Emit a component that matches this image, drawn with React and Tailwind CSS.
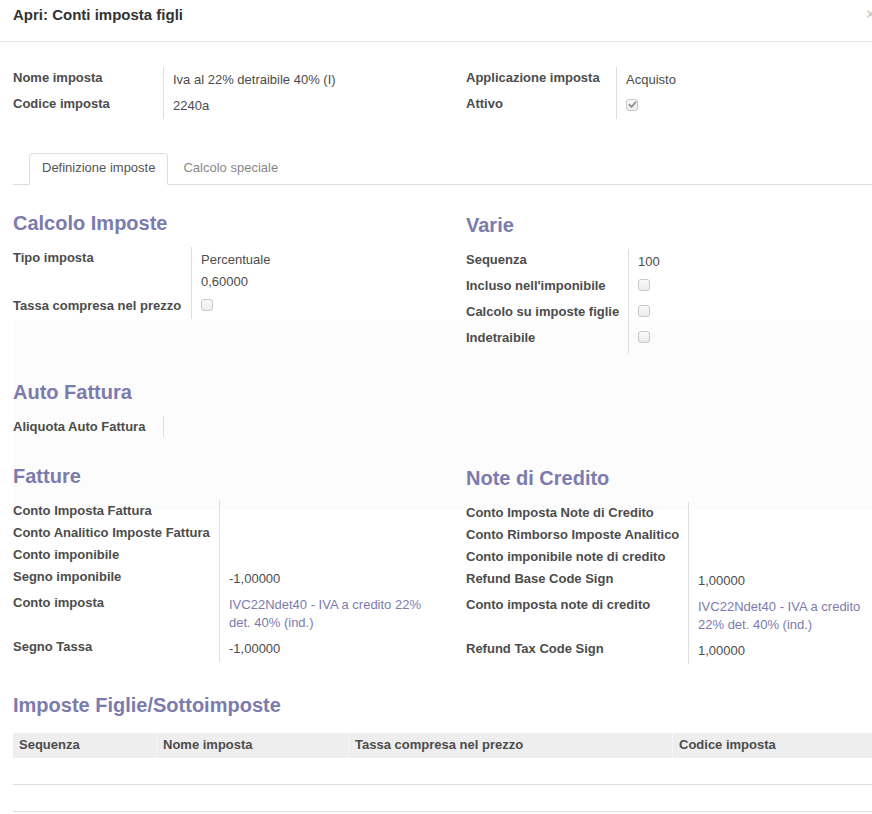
import React from "react";

const font = { fontFamily: '"Liberation Sans", Arial, Helvetica, sans-serif' };

function Check({ checked }) {
  return (
    <span className="inline-flex h-[12px] w-[12px] items-center justify-center rounded-[3px] border border-[#c8c8c8] bg-[linear-gradient(#fafafa,#ececec)]">
      {checked && (
        <svg className="h-[9px] w-[9px]" viewBox="0 0 10 10" fill="none">
          <path d="M1.5 5.2l2.4 2.4L8.6 2.3" stroke="#8a8a8a" strokeWidth="1.8" strokeLinecap="round" strokeLinejoin="round" />
        </svg>
      )}
    </span>
  );
}

function Link({ children }) {
  return <span className="text-[#7c7bad]">{children}</span>;
}

// rows: [label, value, height, valueIsCheckbox]
function Group({ labelW, rows }) {
  return (
    <div className="grid" style={{ gridTemplateColumns: `${labelW}px 1fr` }}>
      {rows.map(([label, value, h, box], i) => (
        <React.Fragment key={i}>
          <div className="pt-[2px] font-bold text-[#4c4c4c]" style={{ height: h }}>
            {label}
          </div>
          <div className={`border-l border-[#dedede] pl-[9px] ${box ? "pt-[3px]" : "pt-[4px]"}`} style={{ height: h }}>
            {value}
          </div>
        </React.Fragment>
      ))}
    </div>
  );
}

function Heading({ children }) {
  return <h2 className="mb-[12px] text-[20px] leading-[24px] font-bold text-[#7c7bad]">{children}</h2>;
}

export default function App() {
  return (
    <div className="w-[872px] overflow-hidden bg-white text-[13px] leading-[18px] text-[#4c4c4c]" style={font}>
      {/* header */}
      <div className="flex h-[42px] items-start justify-between border-b border-[#e5e5e5] pl-[13px]">
        <h4 className="pt-[6px] text-[15px] leading-[18px] font-bold text-[#333]">Apri: Conti imposta figli</h4>
        <span className="mr-[-3px] pt-[5px] text-[15px] leading-[18px] font-bold text-[#cccccc]">×</span>
      </div>

      <div className="ml-[13px]">
        {/* top fields */}
        <div className="mt-[25px] grid grid-cols-[453px_1fr]">
          <Group
            labelW={150}
            rows={[
              ["Nome imposta", "Iva al 22% detraibile 40% (I)", 26],
              ["Codice imposta", "2240a", 26],
            ]}
          />
          <Group
            labelW={150}
            rows={[
              ["Applicazione imposta", "Acquisto", 26],
              ["Attivo", <Check checked />, 26, true],
            ]}
          />
        </div>

        {/* tabs */}
        <div className="mt-[34px] flex border-b border-[#dddddd] pl-[16px]">
          <div className="-mb-px h-[32px] rounded-t-[4px] border border-[#dddddd] border-b-white bg-white px-[12px] pt-[5px] text-[#555]">
            Definizione imposte
          </div>
          <div className="-mb-px ml-[2px] h-[32px] px-[13px] pt-[6px] text-[#888]">Calcolo speciale</div>
        </div>

        <div className="bg-[linear-gradient(to_bottom,transparent_135px,#fcfcfc_135px,#fcfcfc_325px,transparent_325px)] pt-[26px]">
          <div className="grid grid-cols-[453px_1fr]">
            <div>
              <Heading>Calcolo Imposte</Heading>
              <Group
                labelW={178}
                rows={[
                  ["Tipo imposta", "Percentuale", 22],
                  ["", "0,60000", 26],
                  ["Tassa compresa nel prezzo", <Check />, 24, true],
                ]}
              />
            </div>
            <div className="mt-[2px]">
              <Heading>Varie</Heading>
              <Group
                labelW={162}
                rows={[
                  ["Sequenza", "100", 26],
                  ["Incluso nell'imponibile", <Check />, 26, true],
                  ["Calcolo su imposte figlie", <Check />, 26, true],
                  ["Indetraibile", <Check />, 26, true],
                ]}
              />
            </div>
          </div>

          <div className="mt-[27px]">
            <Heading>Auto Fattura</Heading>
            <div className="w-[440px]">
              <Group labelW={150} rows={[["Aliquota Auto Fattura", "", 21]]} />
            </div>
          </div>

          <div className="mt-[27px] grid grid-cols-[453px_1fr]">
            <div className="pr-[24px]">
              <Heading>Fatture</Heading>
              <Group
                labelW={206}
                rows={[
                  ["Conto Imposta Fattura", "", 22],
                  ["Conto Analitico Imposte Fattura", "", 22],
                  ["Conto imponibile", "", 22],
                  ["Segno imponibile", "-1,00000", 26],
                  ["Conto imposta", <Link>IVC22Ndet40 - IVA a credito 22% det. 40% (ind.)</Link>, 44],
                  ["Segno Tassa", "-1,00000", 26],
                ]}
              />
            </div>
            <div className="mt-[2px]">
              <Heading>Note di Credito</Heading>
              <Group
                labelW={222}
                rows={[
                  ["Conto Imposta Note di Credito", "", 22],
                  ["Conto Rimborso Imposte Analitico", "", 22],
                  ["Conto imponibile note di credito", "", 22],
                  ["Refund Base Code Sign", "1,00000", 26],
                  ["Conto imposta note di credito", <Link>IVC22Ndet40 - IVA a credito 22% det. 40% (ind.)</Link>, 44],
                  ["Refund Tax Code Sign", "1,00000", 26],
                ]}
              />
            </div>
          </div>
        </div>

        {/* child taxes */}
        <div className="mt-[29px]">
          <h2 className="mb-[16px] text-[20px] leading-[24px] font-bold text-[#7c7bad]">Imposte Figlie/Sottoimposte</h2>
          <div className="grid h-[25px] grid-cols-[143px_192px_324px_1fr] bg-[#eeeeee] font-bold text-[#4c4c4c]">
            <div className="pl-[6px] pt-[3px]">Sequenza</div>
            <div className="border-l border-[#f6f6f6] pl-[6px] pt-[3px]">Nome imposta</div>
            <div className="border-l border-[#f6f6f6] pl-[6px] pt-[3px]">Tassa compresa nel prezzo</div>
            <div className="border-l border-[#f6f6f6] pl-[6px] pt-[3px]">Codice imposta</div>
          </div>
          <div className="h-[27px] border-b border-[#dddddd]" />
          <div className="h-[27px] border-b border-[#dddddd]" />
        </div>
      </div>
    </div>
  );
}
